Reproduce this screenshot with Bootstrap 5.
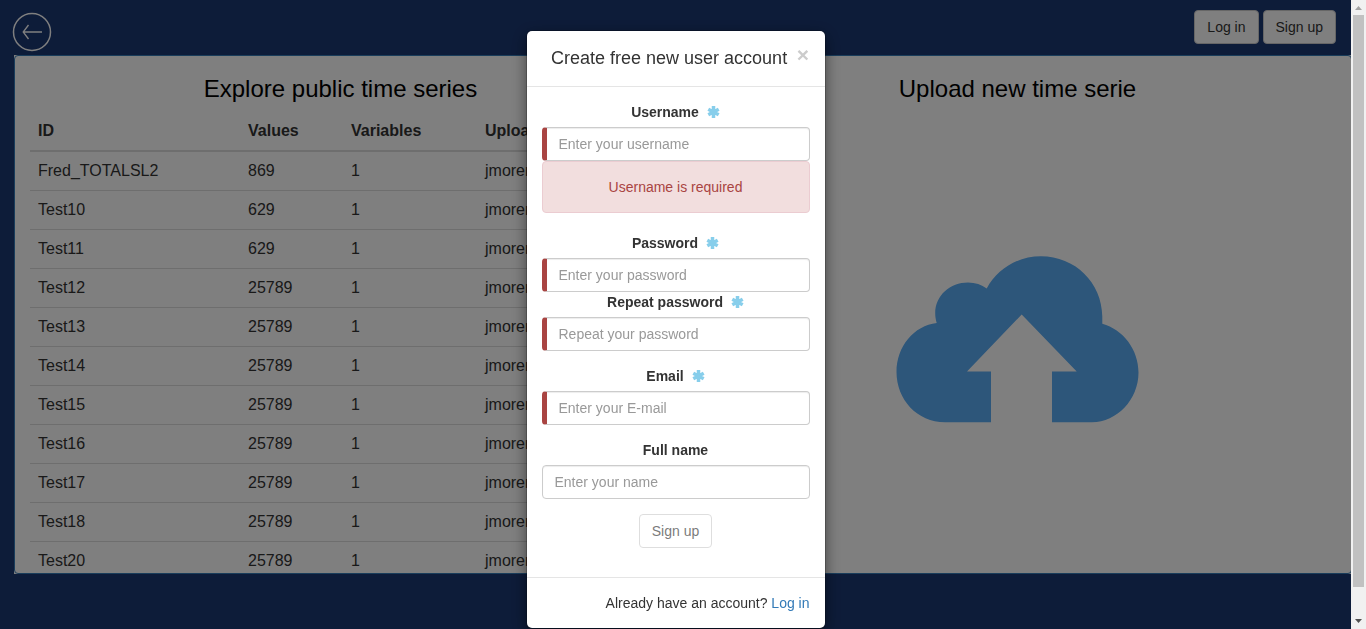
<!DOCTYPE html>
<html lang="en">
<head>
<meta charset="utf-8">
<meta name="viewport" content="width=device-width, initial-scale=1">
<title>Time series</title>
<link href="https://cdn.jsdelivr.net/npm/bootstrap@5.3.0/dist/css/bootstrap.min.css" rel="stylesheet">
<style>
html, body { height: 100%; overflow: hidden; }
body { font-family: "Liberation Sans", Arial, sans-serif; font-size: 16px; line-height: 22px; color: #333; background: #1b3872; }
.page-area { width: 1351px; height: 629px; }
.topbar { height: 55px; padding: 10px 15px 0 12px; }
.back-link { margin-top: 2px; line-height: 0; }
.btn-plain { --bs-btn-font-size: 14px; --bs-btn-line-height: 20px; --bs-btn-padding-y: 6px; --bs-btn-padding-x: 12px; --bs-btn-border-radius: 4px; --bs-btn-color: #333; --bs-btn-bg: #fff; --bs-btn-border-color: #ccc; --bs-btn-disabled-color: #333; --bs-btn-disabled-bg: #fff; --bs-btn-disabled-border-color: #ccc; }
.panel-wrap { margin-left: 14px; width: 1338px; height: 519px; background: #fff; }
.series-panel { height: 100%; border: 1px solid #337ab7; border-radius: 4px; background: #fff; }
.explore { width: 637px; padding: 19px 0 0 15px; }
.upload { width: 667px; margin-left: 33px; padding-top: 19px; }
.pane-title { font-size: 24px; line-height: 27px; font-weight: 400; color: #000; margin: 0; }
.series { margin: 8px 0 0; table-layout: fixed; border-collapse: separate; border-spacing: 0; color: #333; line-height: 22px; --bs-table-color: #333; }
.series > :not(caption) > * > * { padding: 8px; height: 39px; border-bottom: 1px solid #ddd; }
.series > thead > tr > th { height: 42px; padding: 10px 8px 8px; border-bottom: 2px solid #ddd; vertical-align: middle; }
.cloud { margin-top: 154px; }
.shade { --bs-backdrop-bg: rgba(0,0,0,.5); --bs-backdrop-opacity: 1; width: 1351px; height: 629px; }
.signup-modal { width: 1351px; overflow: hidden; font-size: 14px; line-height: 20px; }
.signup-modal .modal-dialog { width: 298px; margin: 31px auto 0; }
.signup-modal .modal-content { height: 597px; border: 0; border-radius: 5px; color: #333; box-shadow: 0 0 0 1px rgba(0,0,0,.2), 0 5px 15px rgba(0,0,0,.5); }
.signup-modal .modal-header { height: 56px; padding: 0 14.5px 0 24.5px; border-color: #e5e5e5; }
.signup-modal .modal-title { font-size: 18px; line-height: 20px; font-weight: 400; white-space: nowrap; padding-bottom: 1px; }
.close-x { border: 0; background: none; padding: 0 0 8px; width: 14px; font: bold 21px/21px "Liberation Sans", Arial, sans-serif; color: #ccc; text-shadow: 0 1px 0 #fff; }
.signup-modal .modal-body { padding: 15px 15px 0; }
.signup-modal .modal-footer { height: 51px; padding: 0 15px; border-color: #e5e5e5; }
.signup-modal .modal-footer a { color: #337ab7; }
.field { margin-bottom: 15px; }
.field label { font-weight: 700; margin-bottom: 5px; height: 20px; }
.field .form-control { height: 34px; padding: 6px 12px; font-size: 14px; line-height: 20px; border: 1px solid #ccc; border-radius: 4px; box-shadow: inset 0 1px 1px rgba(0,0,0,.075); }
.field .form-control::placeholder { color: #999; opacity: 1; }
.field .form-control.req { border-left: 5px solid #a94442; }
.field .alert { padding: 15px; margin-bottom: 20px; border-radius: 4px; color: #a94442; background: #f2dede; border-color: #ebccd1; }
.star { margin-left: 8px; margin-top: 4px; flex: none; }
.scroll-track { width: 15px; height: 629px; background: #f1f1f1; z-index: 1060; }
</style>
</head>
<body>
<svg width="0" height="0" class="position-absolute" aria-hidden="true">
  <symbol id="asterisk" viewBox="0 0 13 13"><path d="M6.500 0v12M1.300 3.200l10.400 5.600M11.700 3.200l-10.400 5.600" fill="none" stroke="#87ceeb" stroke-width="3.500"/></symbol>
</svg>
<div class="page-area">
  <header class="topbar d-flex justify-content-between align-items-start">
    <a href="#" class="back-link" aria-label="Back">
      <svg width="40" height="40" viewBox="0 0 40 40" fill="none" stroke="#fff"><circle cx="20" cy="20" r="18.500" stroke-width="1.500"/><path d="M11 20h19M16.500 13L11.200 20l5.300 7" stroke-width="1.300"/></svg>
    </a>
    <div class="d-flex gap-1">
      <button class="btn btn-plain">Log in</button>
      <button class="btn btn-plain">Sign up</button>
    </div>
  </header>
  <div class="panel-wrap">
    <main class="series-panel d-flex overflow-hidden">
      <section class="explore">
        <h3 class="pane-title text-center">Explore public time series</h3>
        <table class="table series">
          <colgroup><col style="width:210px"><col style="width:103px"><col style="width:134px"><col></colgroup>
          <thead><tr><th>ID</th><th>Values</th><th>Variables</th><th>Uploaded by</th></tr></thead>
          <tbody>
            <tr><td>Fred_TOTALSL2</td><td>869</td><td>1</td><td>jmoreno</td></tr>
            <tr><td>Test10</td><td>629</td><td>1</td><td>jmoreno</td></tr>
            <tr><td>Test11</td><td>629</td><td>1</td><td>jmoreno</td></tr>
            <tr><td>Test12</td><td>25789</td><td>1</td><td>jmoreno</td></tr>
            <tr><td>Test13</td><td>25789</td><td>1</td><td>jmoreno</td></tr>
            <tr><td>Test14</td><td>25789</td><td>1</td><td>jmoreno</td></tr>
            <tr><td>Test15</td><td>25789</td><td>1</td><td>jmoreno</td></tr>
            <tr><td>Test16</td><td>25789</td><td>1</td><td>jmoreno</td></tr>
            <tr><td>Test17</td><td>25789</td><td>1</td><td>jmoreno</td></tr>
            <tr><td>Test18</td><td>25789</td><td>1</td><td>jmoreno</td></tr>
            <tr><td>Test20</td><td>25789</td><td>1</td><td>jmoreno</td></tr>
          </tbody>
        </table>
      </section>
      <section class="upload flex-shrink-0 text-center">
        <h3 class="pane-title">Upload new time serie</h3>
        <svg class="cloud" width="243" height="167" viewBox="896 255.500 243 167" fill="#5aacf4"><path d="M945 421.700C917 421.700 896.500 399 896.500 371.500C896.500 346 914 325 936.700 322.500C930 300 947 282 968 282Q979 282 986.700 288C997 269 1017 255.700 1041 255.700C1075 255.700 1102 282 1102.300 316V323.300C1123 329 1138.500 349 1138.500 372C1138.500 399 1117 421.700 1092 421.700H1052V371H1076.700L1021.700 314L967 371H991V421.700Z"/></svg>
      </section>
    </main>
  </div>
</div>

<div class="modal-backdrop show shade"></div>
<div class="modal show d-block signup-modal" role="dialog" aria-labelledby="signupTitle">
  <div class="modal-dialog">
    <div class="modal-content">
      <div class="modal-header d-flex align-items-center justify-content-between">
        <h4 class="modal-title" id="signupTitle">Create free new user account</h4>
        <button class="close-x" aria-label="Close">×</button>
      </div>
      <form class="modal-body">
        <div class="field">
          <label for="user" class="d-flex justify-content-center">Username<svg class="star" width="13" height="13"><use href="#asterisk"/></svg></label>
          <input id="user" class="form-control req" placeholder="Enter your username">
          <div class="alert alert-danger text-center">Username is required</div>
        </div>
        <div>
          <div class="field mb-0">
            <label for="pass" class="d-flex justify-content-center">Password<svg class="star" width="13" height="13"><use href="#asterisk"/></svg></label>
            <input id="pass" type="password" class="form-control req" placeholder="Enter your password">
          </div>
          <div class="field">
            <label for="pass2" class="d-flex justify-content-center">Repeat password<svg class="star" width="13" height="13"><use href="#asterisk"/></svg></label>
            <input id="pass2" type="password" class="form-control req" placeholder="Repeat your password">
          </div>
        </div>
        <div class="field">
          <label for="mail" class="d-flex justify-content-center">Email<svg class="star" width="13" height="13"><use href="#asterisk"/></svg></label>
          <input id="mail" class="form-control req" placeholder="Enter your E-mail">
        </div>
        <div class="field">
          <label for="full" class="d-flex justify-content-center">Full name</label>
          <input id="full" class="form-control" placeholder="Enter your name">
        </div>
        <div class="text-center"><button class="btn btn-plain" disabled>Sign up</button></div>
      </form>
      <div class="modal-footer d-flex justify-content-end">
        <p class="m-0">Already have an account? <a href="#" class="text-decoration-none">Log in</a></p>
      </div>
    </div>
  </div>
</div>
<div class="scroll-track position-fixed top-0 end-0" aria-hidden="true">
  <svg class="d-block" width="15" height="629"><rect x="2" y="15" width="11" height="572" fill="#c1c1c1"/><path d="M7.500 6L11 10H4Z" fill="#a3a3a3"/><path d="M4 619h7L7.500 623Z" fill="#505050"/></svg>
</div>
<script src="https://cdn.jsdelivr.net/npm/bootstrap@5.3.0/dist/js/bootstrap.bundle.min.js"></script>
</body>
</html>
